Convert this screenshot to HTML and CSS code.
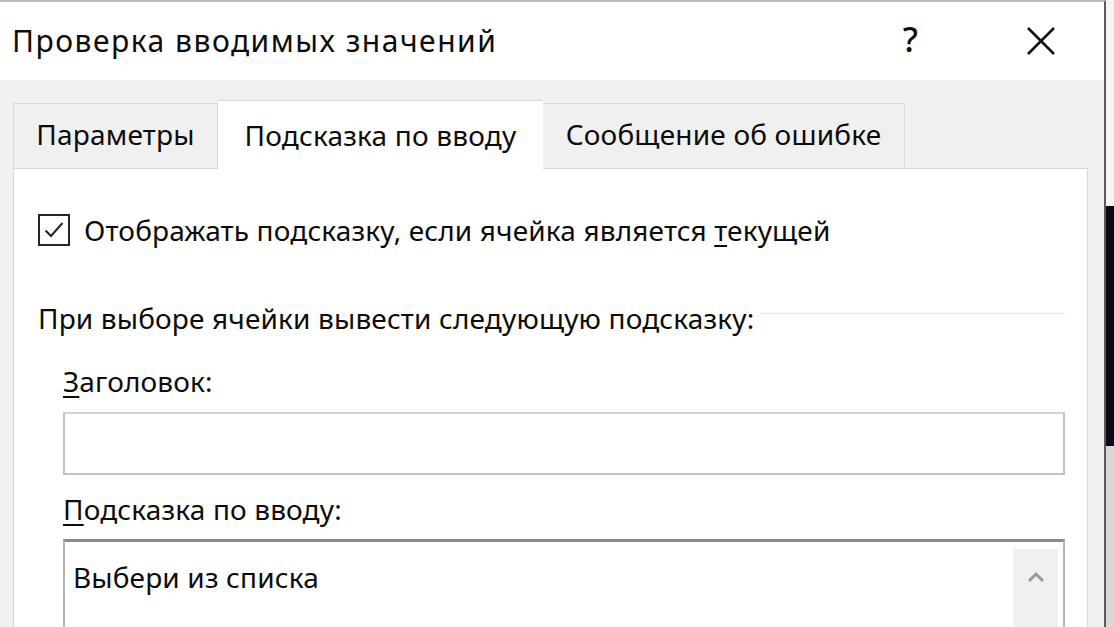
FILE: index.html
```html
<!DOCTYPE html>
<html lang="ru">
<head>
<meta charset="utf-8">
<title>Проверка вводимых значений</title>
<link rel="stylesheet" href="styles.css">
</head>
<body>
<div class="screen">
  <div class="window">
    <div class="titlebar">
      <span class="title">Проверка вводимых значений</span>
      <div class="controls">
        <span class="help">?</span>
        <svg class="close" width="30" height="30" viewBox="0 0 30 30"><path d="M2 2 L28 28 M28 2 L2 28" stroke="#111" stroke-width="2.6" fill="none"/></svg>
      </div>
    </div>
    <div class="body">
      <div class="tabs">
        <div class="tab tab-first">Параметры</div>
        <div class="tab active">Подсказка по вводу</div>
        <div class="tab">Сообщение об ошибке</div>
      </div>
      <div class="panel">
        <div class="check">
          <span class="box"><svg width="24" height="24" viewBox="0 0 24 24"><path d="M3.5 12.5 L9 18 L20.5 5" stroke="#222" stroke-width="2" fill="none"/></svg></span>
          <span class="text">Отображать подсказку, если ячейка является <u>т</u>екущей</span>
        </div>
        <div class="group">
          <span class="text">При выборе ячейки вывести следующую подсказку:</span>
          <span class="rule"></span>
        </div>
        <div class="field">
          <div class="label text"><u>З</u>аголовок:</div>
          <div class="input"></div>
        </div>
        <div class="field field2">
          <div class="label text"><u>П</u>одсказка по вводу:</div>
          <div class="textarea">
            <span class="text">Выбери из списка</span>
            <div class="scroll"><svg width="18" height="12" viewBox="0 0 18 12"><path d="M2 10 L9 3 L16 10" stroke="#9a9a9a" stroke-width="3" fill="none"/></svg></div>
          </div>
        </div>
      </div>
    </div>
  </div>
  <div class="edge"></div>
</div>
</body>
</html>
```
FILE: styles.css
```css
html, body {
  margin: 0;
  padding: 0;
  width: 1114px;
  height: 627px;
  overflow: hidden;
  background: #ffffff;
}
.screen {
  display: flex;
  width: 1114px;
  height: 627px;
  font-family: "Noto Sans", "Open Sans", sans-serif;
  color: #0c0c0c;
}
.window {
  width: 1106px;
  height: 627px;
  border-top: 2px solid #bdbdbd;
  border-right: 2px solid #5a5a5a;
  box-sizing: border-box;
  display: flex;
  flex-direction: column;
  background: #f0f0f0;
  overflow: hidden;
}
.edge {
  width: 8px;
  height: 627px;
  background: linear-gradient(to bottom, #f4f4f4 0, #f4f4f4 206px, #0a0a18 206px, #0a0a18 446px, #d8d8d8 446px, #d8d8d8 100%);
}
.titlebar {
  height: 78px;
  flex-shrink: 0;
  background: #ffffff;
  display: flex;
  align-items: center;
  padding-left: 12px;
  padding-right: 48px;
}
.title {
  font-size: 30px;
  letter-spacing: 1.5px;
  flex: 1;
  padding-bottom: 2px;
}
.controls {
  display: flex;
  align-items: center;
  gap: 108px;
}
.help {
  font-size: 34px;
  font-weight: 500;
  line-height: 34px;
  padding-bottom: 4px;
}
.close {
  display: block;
}
.body {
  flex: 1;
  min-height: 0;
  padding: 23px 0 0 13px;
  display: flex;
  flex-direction: column;
}
.tabs {
  display: flex;
  flex-shrink: 0;
  height: 65px;
  position: relative;
  z-index: 1;
}
.tab {
  height: 65px;
  box-sizing: border-box;
  border: 1px solid #d9d9d9;
  border-bottom: none;
  border-left: none;
  background: #f0f0f0;
  font-size: 28px;
  letter-spacing: 0.2px;
  display: flex;
  align-items: center;
  justify-content: center;
  padding-bottom: 4px;
  width: 362px;
}
.tab-first {
  width: 205px;
  border-left: 1px solid #d9d9d9;
}
.active {
  width: 325px;
  height: 69px;
  margin-top: -3px;
  background: #ffffff;
  border-left: none;
  border-right: none;
  padding-bottom: 0;
}
.panel {
  width: 1075px;
  flex: 1;
  min-height: 0;
  box-sizing: border-box;
  background: #ffffff;
  border: 1px solid #d9d9d9;
  border-bottom: none;
  padding: 43px 22px 0 24px;
}
.text {
  font-size: 28px;
  letter-spacing: 0.15px;
  line-height: 36px;
  white-space: nowrap;
}
.check {
  display: flex;
  align-items: center;
  gap: 14px;
  height: 36px;
}
.box {
  width: 32px;
  height: 32px;
  flex-shrink: 0;
  box-sizing: border-box;
  border: 2px solid #262626;
  display: flex;
  align-items: center;
  justify-content: center;
}
.box svg { display: block; }
.group {
  display: flex;
  align-items: center;
  margin-top: 52px;
  height: 36px;
}
.rule {
  flex: 1;
  height: 1px;
  background: #e3e3e3;
  margin-left: 6px;
  margin-top: -10px;
}
.field {
  margin-top: 27px;
  padding-left: 25px;
}
.field2 {
  margin-top: 16px;
}
.label {
  height: 36px;
}
.input {
  margin-top: 13px;
  width: 1002px;
  height: 63px;
  box-sizing: border-box;
  border: 2px solid #c2c2c2;
  border-top-color: #d0d0d0;
}
.textarea {
  margin-top: 12px;
  width: 1002px;
  height: 120px;
  box-sizing: border-box;
  border: 2px solid #b6b6b6;
  border-top: 3px solid #8c8c8c;
  display: flex;
  justify-content: space-between;
  padding: 17px 5px 0 8px;
  position: relative;
}
.scroll {
  position: absolute;
  right: 5px;
  top: 7px;
  width: 45px;
  height: 120px;
  background: #f0f0f0;
  display: flex;
  justify-content: center;
  padding-top: 22px;
  box-sizing: border-box;
}
.scroll svg { display: block; }
u {
  text-decoration-thickness: 2px;
  text-underline-offset: 4px;
}
```
